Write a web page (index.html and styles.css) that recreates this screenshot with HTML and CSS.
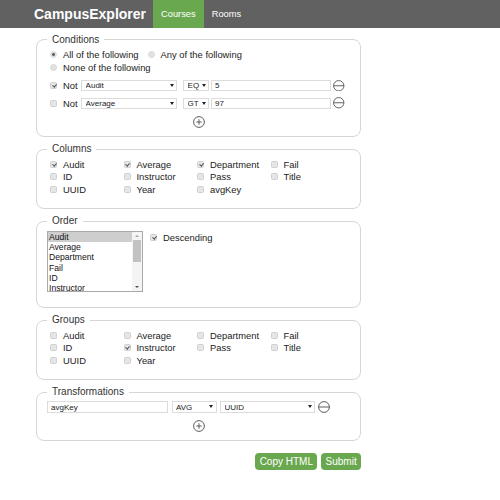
FILE: index.html
```html
<!DOCTYPE html>
<html lang="en">
<head>
<meta charset="utf-8">
<title>CampusExplorer</title>
<link rel="stylesheet" href="styles.css">
</head>
<body>
<header class="topbar">
  <span class="brand">CampusExplorer</span>
  <nav class="tabs">
    <a class="tab tab-active">Courses</a>
    <a class="tab">Rooms</a>
  </nav>
</header>
<main class="page">
  <form class="query">
    <fieldset class="panel panel-conditions">
      <legend>Conditions</legend>
      <div class="radio-line">
        <label class="choice choice-radio"><input type="radio" name="logic" checked>All of the following</label>
        <label class="choice choice-radio"><input type="radio" name="logic">Any of the following</label>
      </div>
      <div class="radio-line">
        <label class="choice choice-radio"><input type="radio" name="logic">None of the following</label>
      </div>
      <div class="cond-row">
        <label class="choice choice-not"><input type="checkbox" checked>Not</label>
        <span class="sel sel-field"><select><option>Audit</option></select></span>
        <span class="sel sel-op"><select><option>EQ</option></select></span>
        <input class="text-in cond-value" type="text" value="5">
        <button type="button" class="icon-btn icon-minus"><svg viewBox="0 0 12 12" width="11.5" height="11.5"><circle cx="6" cy="6" r="5.4"/><line x1="0.6" y1="6" x2="11.4" y2="6"/></svg></button>
      </div>
      <div class="cond-row">
        <label class="choice choice-not"><input type="checkbox">Not</label>
        <span class="sel sel-field"><select><option>Average</option></select></span>
        <span class="sel sel-op"><select><option>GT</option></select></span>
        <input class="text-in cond-value" type="text" value="97">
        <button type="button" class="icon-btn icon-minus"><svg viewBox="0 0 12 12" width="11.5" height="11.5"><circle cx="6" cy="6" r="5.4"/><line x1="0.6" y1="6" x2="11.4" y2="6"/></svg></button>
      </div>
      <div class="add-line add-line-cond">
        <button type="button" class="icon-btn icon-plus"><svg viewBox="0 0 12 12" width="12" height="12"><circle cx="6" cy="6" r="5.4"/><line x1="6" y1="3.3" x2="6" y2="8.7"/><line x1="3.3" y1="6" x2="8.7" y2="6"/></svg></button>
      </div>
    </fieldset>

    <fieldset class="panel">
      <legend>Columns</legend>
      <div class="check-grid">
        <label class="choice"><input type="checkbox" checked>Audit</label>
        <label class="choice"><input type="checkbox" checked>Average</label>
        <label class="choice"><input type="checkbox" checked>Department</label>
        <label class="choice"><input type="checkbox">Fail</label>
        <label class="choice"><input type="checkbox">ID</label>
        <label class="choice"><input type="checkbox">Instructor</label>
        <label class="choice"><input type="checkbox">Pass</label>
        <label class="choice"><input type="checkbox">Title</label>
        <label class="choice"><input type="checkbox">UUID</label>
        <label class="choice"><input type="checkbox">Year</label>
        <label class="choice"><input type="checkbox">avgKey</label>
      </div>
    </fieldset>

    <fieldset class="panel">
      <legend>Order</legend>
      <div class="order-row">
        <div class="listbox">
          <ul class="listbox-options">
            <li class="is-selected">Audit</li>
            <li>Average</li>
            <li>Department</li>
            <li>Fail</li>
            <li>ID</li>
            <li>Instructor</li>
            <li>Pass</li>
          </ul>
          <div class="scrollbar">
            <span class="sb-btn sb-up"></span>
            <span class="sb-thumb"></span>
            <span class="sb-track"></span>
            <span class="sb-btn sb-down"></span>
          </div>
        </div>
        <label class="choice choice-desc"><input type="checkbox" checked>Descending</label>
      </div>
    </fieldset>

    <fieldset class="panel">
      <legend>Groups</legend>
      <div class="check-grid">
        <label class="choice"><input type="checkbox">Audit</label>
        <label class="choice"><input type="checkbox">Average</label>
        <label class="choice"><input type="checkbox">Department</label>
        <label class="choice"><input type="checkbox">Fail</label>
        <label class="choice"><input type="checkbox">ID</label>
        <label class="choice"><input type="checkbox" checked>Instructor</label>
        <label class="choice"><input type="checkbox">Pass</label>
        <label class="choice"><input type="checkbox">Title</label>
        <label class="choice"><input type="checkbox">UUID</label>
        <label class="choice"><input type="checkbox">Year</label>
      </div>
    </fieldset>

    <fieldset class="panel">
      <legend>Transformations</legend>
      <div class="tfm-row">
        <input class="text-in tfm-name" type="text" value="avgKey">
        <span class="sel sel-apply"><select><option>AVG</option></select></span>
        <span class="sel sel-key"><select><option>UUID</option></select></span>
        <button type="button" class="icon-btn icon-minus"><svg viewBox="0 0 12 12" width="12" height="12"><circle cx="6" cy="6" r="5.4"/><line x1="0.6" y1="6" x2="11.4" y2="6"/></svg></button>
      </div>
      <div class="add-line add-line-tfm">
        <button type="button" class="icon-btn icon-plus"><svg viewBox="0 0 12 12" width="12" height="12"><circle cx="6" cy="6" r="5.4"/><line x1="6" y1="3.3" x2="6" y2="8.7"/><line x1="3.3" y1="6" x2="8.7" y2="6"/></svg></button>
      </div>
    </fieldset>

    <div class="actions">
      <button type="button" class="btn">Copy HTML</button>
      <button type="button" class="btn">Submit</button>
    </div>
  </form>
</main>
</body>
</html>
```

FILE: styles.css
```css
* {
  box-sizing: border-box;
}

html,
body {
  margin: 0;
  background: #ffffff;
}

body {
  font-family: "Liberation Sans", Arial, sans-serif;
  font-size: 9.4px;
  color: #222222;
}

/* top bar */
.topbar {
  display: flex;
  height: 28px;
  background: #616161;
}

.brand {
  padding-left: 34px;
  margin-right: 7px;
  font-size: 14px;
  font-weight: bold;
  line-height: 28px;
  color: #ffffff;
}

.tabs {
  display: flex;
}

.tab {
  padding: 0 8px;
  font-size: 9.3px;
  line-height: 28px;
  color: #ffffff;
  text-decoration: none;
}

.tab-active {
  background: #6aa84f;
}

/* page */
.page {
  width: 325px;
  margin-left: 36px;
}

.query {
  margin: 0;
}

.panel {
  min-width: 0;
  margin: 0 0 6px;
  padding: 3px 10px 8px;
  border: 1px solid #d6d6d6;
  border-radius: 8px;
}

.panel-conditions {
  margin-top: 5.5px;
}

.panel legend {
  padding: 0 5px;
  font-size: 10px;
  line-height: 12px;
  color: #333333;
}

/* choices */
.choice {
  display: flex;
  align-items: center;
  white-space: nowrap;
  height: 12.5px;
}

.choice input[type="checkbox"],
.choice input[type="radio"] {
  appearance: none;
  -webkit-appearance: none;
  flex: none;
  position: relative;
  width: 7px;
  height: 7px;
  margin: 0 6px 0 3px;
  border: 1px solid #d0d0d0;
  background: #e6e6e6;
}

.choice input[type="checkbox"] {
  border-radius: 1.5px;
}

.choice input[type="checkbox"]:checked::after {
  content: "";
  position: absolute;
  left: 1.7px;
  top: -0.2px;
  width: 1.6px;
  height: 3.4px;
  border: solid #4f4f4f;
  border-width: 0 1px 1px 0;
  transform: rotate(40deg);
}

.choice input[type="radio"] {
  border-radius: 50%;
  border-color: #d8d8d8;
  background: #e2e2e2;
}

.choice input[type="radio"]:checked {
  background: radial-gradient(circle, #5c5c5c 0 1.1px, #e2e2e2 1.7px);
}

.radio-line {
  display: flex;
  height: 12.5px;
}

.choice-radio {
  margin-right: 6px;
}

/* condition rows */
.cond-row {
  display: flex;
  align-items: center;
  height: 11px;
  margin-top: 6.5px;
}

.choice-not {
  margin-right: 3.5px;
}

.sel {
  position: relative;
  display: block;
  flex: none;
  height: 11px;
}

.sel select {
  appearance: none;
  -webkit-appearance: none;
  display: block;
  width: 100%;
  height: 100%;
  margin: 0;
  padding: 0 0 0 3.5px;
  border: 1px solid #dcdcdc;
  border-radius: 0;
  background: #ffffff;
  font-family: inherit;
  font-size: 8px;
  color: #222222;
}

.sel::after {
  content: "";
  position: absolute;
  right: 3.5px;
  top: 4px;
  border-left: 2px solid transparent;
  border-right: 2px solid transparent;
  border-top: 3px solid #222222;
}

.sel-field {
  width: 96px;
}

.sel-op {
  width: 26px;
  margin-left: 6px;
}

.text-in {
  flex: none;
  height: 11px;
  margin: 0;
  padding: 0 3px;
  border: 1px solid #dcdcdc;
  background: #ffffff;
  font-family: inherit;
  font-size: 8px;
  color: #222222;
  outline: none;
}

.cond-value {
  width: 120px;
  margin-left: 2px;
}

.icon-btn {
  display: flex;
  align-items: center;
  justify-content: center;
  flex: none;
  margin: 0;
  padding: 0;
  border: 0;
  background: none;
}

.icon-btn svg {
  display: block;
  fill: none;
  stroke: #555555;
  stroke-width: 0.95;
}

.cond-row .icon-minus {
  margin-left: 2px;
}

.add-line {
  display: flex;
  justify-content: center;
  height: 12px;
}

.add-line-cond {
  margin-top: 7.5px;
}

.add-line-tfm {
  margin-top: 6.5px;
}

/* checkbox grids */
.check-grid {
  display: grid;
  grid-template-columns: repeat(4, 73.5px);
  grid-auto-rows: 12.5px;
  margin-bottom: 4.5px;
}

/* order */
.order-row {
  display: flex;
  align-items: flex-start;
  margin-top: 1px;
  margin-bottom: 7px;
}

.listbox {
  display: flex;
  flex: none;
  width: 96px;
  height: 61px;
  border: 1px solid #a9a9a9;
  overflow: hidden;
  background: #ffffff;
}

.listbox-options {
  flex: 1;
  margin: 0;
  padding: 0;
  list-style: none;
  font-size: 8.6px;
  line-height: 10.2px;
  color: #111111;
}

.listbox-options li {
  padding-left: 1px;
}

.listbox-options .is-selected {
  background: #cecece;
}

.scrollbar {
  display: flex;
  flex-direction: column;
  flex: none;
  width: 10px;
  background: #f4f4f4;
}

.sb-btn {
  display: flex;
  align-items: center;
  justify-content: center;
  height: 8px;
}

.sb-up::before {
  content: "";
  border-left: 2px solid transparent;
  border-right: 2px solid transparent;
  border-bottom: 2.5px solid #a3a3a3;
}

.sb-down::before {
  content: "";
  border-left: 2px solid transparent;
  border-right: 2px solid transparent;
  border-top: 2.5px solid #505050;
}

.sb-thumb {
  height: 22px;
  margin: 0 1px;
  background: #c2c2c2;
}

.sb-track {
  flex: 1;
}

.choice-desc {
  margin-left: 4px;
}

/* transformations */
.tfm-row {
  display: flex;
  align-items: center;
  height: 12px;
}

.tfm-name {
  width: 120.5px;
  height: 12px;
}

.tfm-row .sel {
  height: 12px;
}

.sel-apply {
  width: 45px;
  margin-left: 4px;
}

.sel-key {
  width: 95px;
  margin-left: 3.5px;
}

.tfm-row .icon-minus {
  margin-left: 2.7px;
}

/* actions */
.actions {
  display: flex;
  justify-content: flex-end;
  gap: 4px;
  margin-top: 12px;
}

.btn {
  height: 17px;
  margin: 0;
  padding: 0 4.3px;
  border: 0;
  border-radius: 4px;
  background: #6aa84f;
  font-family: inherit;
  font-size: 10px;
  color: #ffffff;
}
```
